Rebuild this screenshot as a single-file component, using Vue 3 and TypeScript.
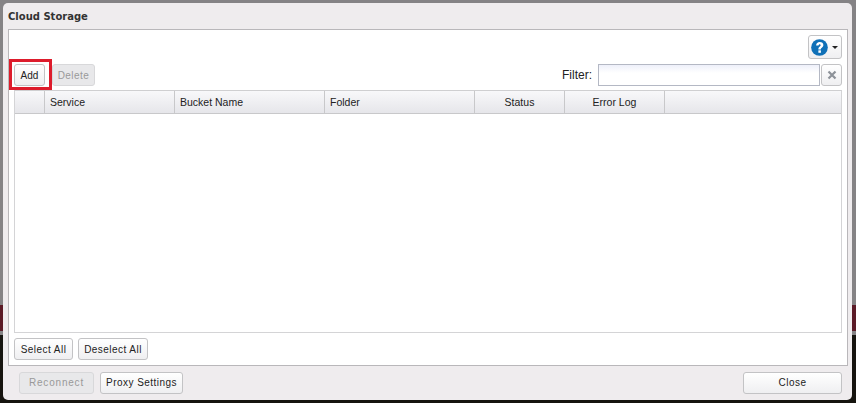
<script setup lang="ts">
const columns = [
  { label: 'Service', width: 130, align: 'left' },
  { label: 'Bucket Name', width: 150, align: 'left' },
  { label: 'Folder', width: 150, align: 'left' },
  { label: 'Status', width: 90, align: 'center' },
  { label: 'Error Log', width: 100, align: 'center' },
]
</script>

<template>
  <div class="page">
    <div class="dialog">
      <div class="title">Cloud Storage</div>
      <div class="panel">
        <div class="help-row">
          <button class="btn help">
            <svg width="17" height="17" viewBox="0 0 18 18">
              <circle cx="9" cy="9" r="8.800" fill="#0f70b7" />
              <path d="M5.400 6.900C5.500 4.500 7 3.200 9.300 3.200c2.300 0 3.800 1.300 3.800 3.200 0 2.700-2.700 2.800-2.700 4.700H7.800c0-3 2.400-3.100 2.400-4.500 0-.7-.4-1.100-1-1.100-.8 0-1.100.6-1.200 1.400z" fill="#fff" />
              <rect x="7.800" y="12" width="2.700" height="2.600" fill="#fff" />
            </svg>
            <span class="caret"></span>
          </button>
        </div>
        <div class="tool-row">
          <button class="btn add">Add</button>
          <button class="btn delete" disabled>Delete</button>
          <span class="filter-label">Filter:</span>
          <input class="filter" />
          <button class="btn clear">
            <svg width="10" height="10" viewBox="0 0 10 10">
              <path d="M1.500 1.500l7 7M8.500 1.500l-7 7" stroke="#8d9299" stroke-width="2.200" />
            </svg>
          </button>
        </div>
        <div class="grid">
          <div class="grid-head">
            <div class="cell first"></div>
            <div
              v-for="c in columns"
              :key="c.label"
              class="cell"
              :class="c.align"
              :style="{ width: c.width + 'px' }"
            >{{ c.label }}</div>
            <div class="cell last"></div>
          </div>
          <div class="grid-body"></div>
        </div>
        <div class="select-row">
          <button class="btn select">Select All</button>
          <button class="btn deselect">Deselect All</button>
        </div>
      </div>
      <div class="footer">
        <button class="btn reconnect" disabled>Reconnect</button>
        <button class="btn proxy">Proxy Settings</button>
        <button class="btn close">Close</button>
      </div>
    </div>
  </div>
</template>

<style>
html, body { margin: 0; padding: 0; }
</style>

<style scoped>
.page {
  width: 856px;
  height: 403px;
  box-sizing: border-box;
  padding: 3px 4px 3px 3px;
  background: linear-gradient(#858385 0 305px, #5b1a26 305px 331px, #858385 331px 335px, #16140f 335px);
  overflow: hidden;
}
.dialog {
  height: 397px;
  box-sizing: border-box;
  background: #efecee;
  border-radius: 5px;
  padding: 0 4px 0 5px;
  display: flex;
  flex-direction: column;
  font-family: "DejaVu Sans", sans-serif;
  color: #222;
}
.title {
  height: 26px;
  flex: none;
  font-size: 10px;
  font-weight: 700;
  line-height: 27px;
  color: #333;
}
.panel {
  height: 337px;
  flex: none;
  box-sizing: border-box;
  background: #fff;
  border: 1px solid #b9b7ba;
  padding: 5px 5px 0;
  display: flex;
  flex-direction: column;
}
.btn {
  box-sizing: border-box;
  height: 22px;
  padding: 0;
  border: 1px solid #c3c3c5;
  border-radius: 3px;
  background: linear-gradient(#ffffff, #efeff1);
  font-family: "Liberation Sans", sans-serif;
  font-size: 10px;
  letter-spacing: 0.45px;
  color: #222;
}
.btn:disabled {
  background: #e8e8ea;
  color: #999;
  border-color: #d8d8da;
}
.help-row {
  display: flex;
  justify-content: flex-end;
  height: 24px;
  flex: none;
}
.help {
  width: 34px;
  height: 24px;
  display: flex;
  align-items: center;
  padding-left: 2px;
  gap: 4px;
}
.caret {
  border: 3px solid transparent;
  border-top: 3px solid #222;
  border-bottom: 0;
}
.tool-row {
  height: 22px;
  margin-top: 5px;
  flex: none;
  display: flex;
  align-items: center;
}
.add {
  width: 31px;
  position: relative;
  letter-spacing: 0;
}
.add::after {
  content: "";
  position: absolute;
  top: -6px;
  bottom: -5px;
  left: -6px;
  right: -8px;
  border: 3px solid #dd1c2c;
}
.delete { width: 43px; margin-left: 7px; }
.filter-label {
  margin-left: auto;
  margin-right: 6px;
  font-family: "Liberation Sans", sans-serif;
  font-size: 12px;
  color: #222;
}
.filter {
  box-sizing: border-box;
  width: 222px;
  height: 22px;
  border: 1px solid #b4b8c4;
  background: linear-gradient(#eef0fa, #ffffff 40%);
  padding: 0;
  outline: none;
}
.clear {
  width: 21px;
  margin-left: 1px;
  display: flex;
  align-items: center;
  justify-content: center;
}
.grid {
  margin-top: 4px;
  height: 243px;
  flex: none;
  box-sizing: border-box;
  border: 1px solid #d4d4d6;
  border-top-color: #cfcfd1;
  display: flex;
  flex-direction: column;
}
.grid-head {
  display: flex;
  height: 23px;
  flex: none;
  box-sizing: border-box;
  border-bottom: 1px solid #c8c8ca;
  background: linear-gradient(#f8f8fa, #e6e6ea);
}
.cell {
  box-sizing: border-box;
  border-right: 1px solid #c8c8ca;
  font-family: "Liberation Sans", sans-serif;
  font-size: 10.5px;
  line-height: 22px;
  padding-left: 5px;
  flex: none;
}
.cell.first { width: 30px; padding: 0; }
.cell.center { text-align: center; padding-left: 0; }
.cell.last { flex: 1; border-right: 0; }
.grid-body { flex: 1; background: #fff; }
.select-row {
  margin-top: 5px;
  display: flex;
  gap: 5px;
}
.select { width: 59px; }
.deselect { width: 70px; }
.footer {
  height: 33px;
  flex: none;
  display: flex;
  align-items: center;
  padding: 0 6px 0 11px;
}
.reconnect { width: 75px; letter-spacing: 0.8px; }
.proxy { width: 83px; margin-left: 6px; }
.close { width: 99px; margin-left: auto; }
</style>
